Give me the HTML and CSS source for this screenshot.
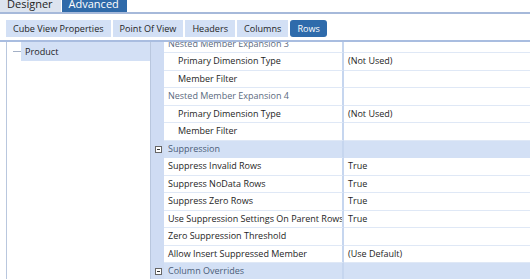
FILE: index.html
```html
<!DOCTYPE html>
<html lang="en">

<head>
    <meta charset="UTF-8">
    <title>Cube View - Rows</title>
    <link rel="stylesheet" href="styles.css">
</head>

<body>

    <div class="topbar">
        <div class="top-tab">Designer</div>
        <div class="top-tab active">Advanced</div>
    </div>

    <div class="subbar">
        <div class="sub-tab">Cube View Properties</div>
        <div class="sub-tab">Point Of View</div>
        <div class="sub-tab">Headers</div>
        <div class="sub-tab">Columns</div>
        <div class="sub-tab active">Rows</div>
    </div>

    <div class="main">
        <div class="tree">
            <div class="tree-row">
                <span class="tree-line"></span>
                <span class="tree-item">Product</span>
            </div>
        </div>

        <div class="grid">
            <div class="grid-inner">
                <div class="row sub"><span class="margin"></span><span class="name">Nested Member Expansion 3</span><span class="value"></span></div>
                <div class="row nested"><span class="margin"></span><span class="name">Primary Dimension Type</span><span class="value">(Not Used)</span></div>
                <div class="row nested"><span class="margin"></span><span class="name">Member Filter</span><span class="value"></span></div>
                <div class="row sub"><span class="margin"></span><span class="name">Nested Member Expansion 4</span><span class="value"></span></div>
                <div class="row nested"><span class="margin"></span><span class="name">Primary Dimension Type</span><span class="value">(Not Used)</span></div>
                <div class="row nested"><span class="margin"></span><span class="name">Member Filter</span><span class="value"></span></div>
                <div class="row category"><span class="margin"><i class="toggle"></i></span><span class="name">Suppression</span><span class="value"></span></div>
                <div class="row"><span class="margin"></span><span class="name">Suppress Invalid Rows</span><span class="value">True</span></div>
                <div class="row"><span class="margin"></span><span class="name">Suppress NoData Rows</span><span class="value">True</span></div>
                <div class="row"><span class="margin"></span><span class="name">Suppress Zero Rows</span><span class="value">True</span></div>
                <div class="row"><span class="margin"></span><span class="name">Use Suppression Settings On Parent Rows</span><span class="value">True</span></div>
                <div class="row"><span class="margin"></span><span class="name">Zero Suppression Threshold</span><span class="value"></span></div>
                <div class="row"><span class="margin"></span><span class="name">Allow Insert Suppressed Member</span><span class="value">(Use Default)</span></div>
                <div class="row category"><span class="margin"><i class="toggle"></i></span><span class="name">Column Overrides</span><span class="value"></span></div>
            </div>
        </div>
    </div>

</body>

</html>
```

FILE: styles.css
```css
html,
body {
    margin: 0;
    padding: 0;
    height: 100%;
    overflow: hidden;
    background: #fff;
    font-family: "Open Sans", sans-serif;
    font-size: 9.1px;
    color: #1e1e1e;
}

/* top tabs, cut off at the top of the window */
.topbar {
    display: flex;
    gap: 1px;
    height: 12px;
    overflow: hidden;
    border-bottom: 2px solid #a6b9da;
}

.top-tab {
    padding: 0 8px 0 7px;
    margin-top: -4px;
    line-height: 16px;
    font-size: 11px;
    background: #dde4ef;
    color: #1e1e1e;
}

.top-tab.active {
    background: #2f6aa9;
    color: #fff;
}

.subbar {
    display: flex;
    gap: 2px;
    padding: 6px 0 0 6px;
    height: 17px;
    margin-bottom: 3px;
}

.sub-tab {
    padding: 0 7px;
    line-height: 17px;
    background: #d3e0f5;
    color: #1e1e1e;
}

.sub-tab.active {
    background: #2e6bab;
    color: #fff;
    border-radius: 3px;
}

.main {
    display: flex;
    height: 238px;
    border-top: 2px solid #a9bde0;
}

.tree {
    width: 143px;
    margin-left: 6px;
    border-left: 1px solid #b9c7de;
    border-right: 1px solid #b9c7de;
}

.tree-row {
    display: flex;
    align-items: center;
    height: 19px;
}

.tree-line {
    width: 8px;
    height: 1px;
    margin-left: 6px;
    background: #a3b0c6;
}

.tree-item {
    flex: 1;
    height: 19px;
    line-height: 19px;
    padding-left: 4px;
    background: #d3e0f5;
}

/* property grid */
.grid {
    flex: 1;
    overflow: hidden;
}

.grid-inner {
    margin-top: -6.5px;
}

.row {
    display: grid;
    grid-template-columns: 13px 180px 1fr;
    height: 17.5px;
    line-height: 16.5px;
    font-size: 9px;
    white-space: nowrap;
}

.margin {
    display: flex;
    align-items: center;
    justify-content: center;
    background: #cfdcf3;
}

.name {
    padding-left: 4px;
    overflow: hidden;
    border-right: 2px solid #c6d6ef;
    border-bottom: 1px solid #dfe8f6;
}

.value {
    padding-left: 4px;
    border-bottom: 1px solid #dfe8f6;
}

.row.sub .name {
    padding-left: 4px;
    color: #5b6a7e;
}

.row.nested .name {
    padding-left: 14px;
}

.row.category {
    background: #d3e0f5;
}

.row.category .name {
    padding-left: 4px;
    color: #4b5d78;
    border-bottom: 1px solid #d3e0f5;
}

.row.category .value {
    border-bottom: 1px solid #d3e0f5;
}

.toggle {
    position: relative;
    width: 5px;
    height: 5px;
    margin-left: 1px;
    border: 1px solid #666;
    background: #fff;
}

.toggle::after {
    content: "";
    position: absolute;
    left: 1px;
    top: 2px;
    width: 3px;
    height: 1px;
    background: #333;
}
```
